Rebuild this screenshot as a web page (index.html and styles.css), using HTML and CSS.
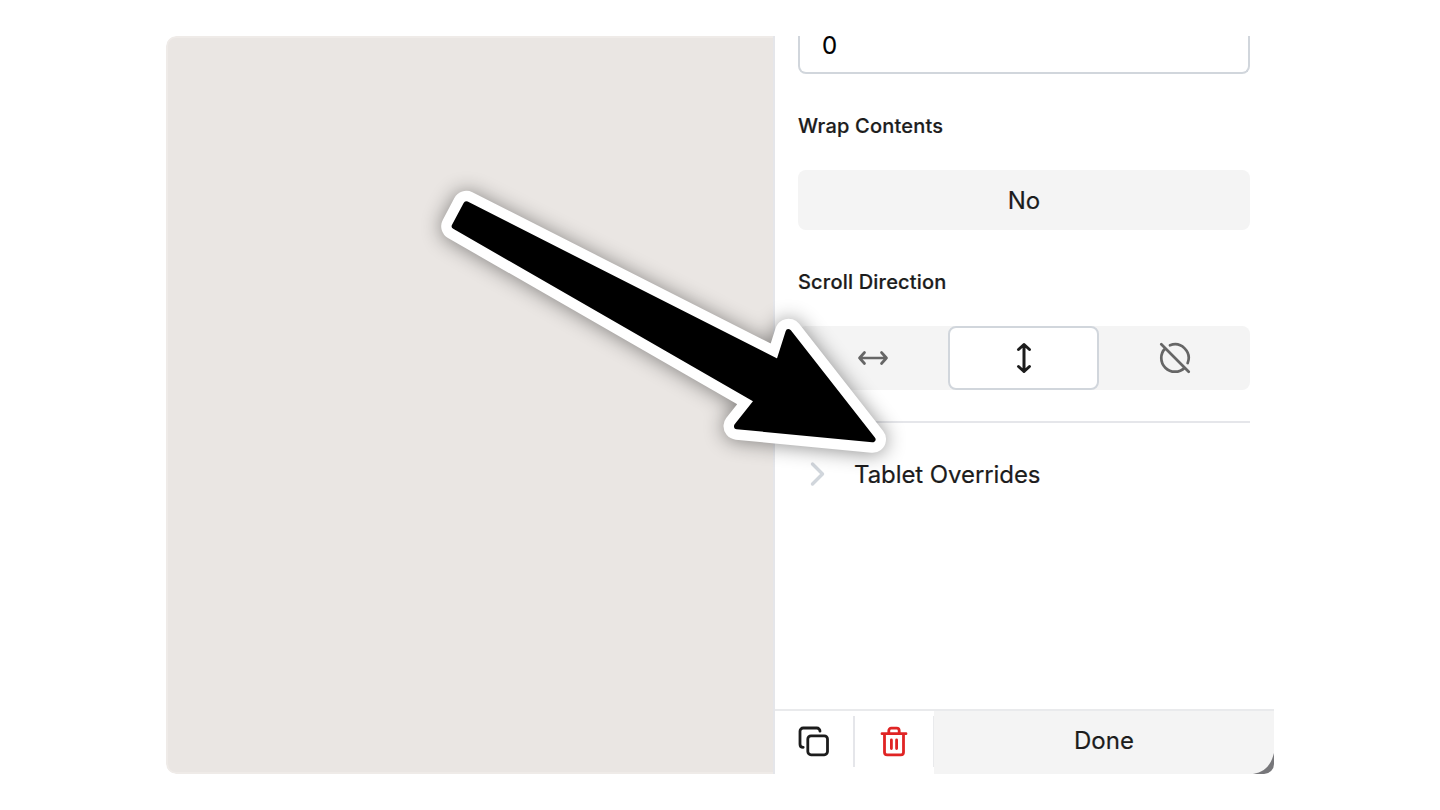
FILE: index.html
```html
<!DOCTYPE html>
<html lang="en">
<head>
<meta charset="utf-8">
<title>Layout settings</title>
<link rel="stylesheet" href="styles.css">
</head>
<body>
<main class="window">
  <div class="canvas"></div>
  <section class="panel">
    <div class="fields">
      <div class="number-field"><span>0</span></div>
      <h2 class="label">Wrap Contents</h2>
      <button class="toggle">No</button>
      <h2 class="label">Scroll Direction</h2>
      <div class="segments">
        <button class="segment" aria-label="Horizontal">
          <svg width="32" height="32" viewBox="0 0 32 32"><path d="M2.500 16h27M7.500 10.500L2.500 16l5 5.500M24.500 10.500l5 5.500-5 5.500"/></svg>
        </button>
        <button class="segment selected" aria-label="Vertical">
          <svg width="32" height="32" viewBox="0 0 32 32"><path d="M16 2.500v27M10.500 7.500L16 2.500l5.500 5M10.500 24.500l5.500 5 5.500-5"/></svg>
        </button>
        <button class="segment" aria-label="None">
          <svg width="32" height="32" viewBox="0 0 32 32"><path d="M2.300 2.300l27.400 27.400M6.300 6.300A13.700 13.700 0 0 0 25.700 25.700M11 3.300A13.700 13.700 0 0 1 28.700 21"/></svg>
        </button>
      </div>
      <div class="overrides">
        <svg class="chevron" width="16" height="26" viewBox="0 0 16 26"><path d="M2.500 3l10 10-10 10"/></svg>
        <span>Tablet Overrides</span>
      </div>
    </div>
    <footer class="actions">
      <button class="action copy" aria-label="Duplicate">
        <svg width="32" height="32" viewBox="0 0 32 32"><rect x="9.800" y="9.800" width="19.700" height="19" rx="3.200"/><path d="M5.200 21.300C3.300 21.300 2 20 2 18.200V5.200C2 3.400 3.400 2 5.200 2h13.600c1.800 0 3.200 1.400 3.200 3.200"/></svg>
      </button>
      <button class="action trash" aria-label="Delete">
        <svg width="32" height="32" viewBox="0 0 32 32"><path d="M4 7.700h24M6.500 7.700v18.500c0 1.700 1 2.700 2.700 2.700h13.600c1.700 0 2.700-1 2.700-2.700V7.700M10.800 7.300V4.700c0-1.500 1-2.500 2.500-2.500h5.400c1.500 0 2.500 1 2.500 2.500v2.600M13.400 14v8.600M18.600 14v8.600"/></svg>
      </button>
      <button class="done">Done</button>
    </footer>
  </section>
  <svg class="corner" width="24" height="24" viewBox="0 0 24 24"><path d="M24 3C21 15 15 22 3 24H18Q24 24 24 18Z"/></svg>
</main>
<svg class="arrow" width="1440" height="810" viewBox="0 0 1440 810">
  <path class="arrow-outline" d="M466.300 204.300L778.800 362.700 788.500 332.200 872.500 439.300 737 426.200 757.500 400.300 454.700 226.200Z"/>
  <path class="arrow-fill" d="M466.300 204.300L778.800 362.700 788.500 332.200 872.500 439.300 737 426.200 757.500 400.300 454.700 226.200Z"/>
</svg>
</body>
</html>
```
FILE: styles.css
```css
* { box-sizing: border-box; }

body {
  margin: 0;
  height: 810px;
  padding: 36px 166px;
  overflow: hidden;
  background: #fff;
  color: #1c1c1c;
  font-family: Inter, "Liberation Sans", sans-serif;
}

button {
  margin: 0;
  padding: 0;
  border: 0;
  background: none;
  color: inherit;
  font: inherit;
}

svg {
  display: block;
  fill: none;
  stroke: currentColor;
  stroke-linecap: round;
  stroke-linejoin: round;
}

.window {
  position: relative;
  display: flex;
  width: 1108px;
  height: 738px;
  border-radius: 10px;
  overflow: hidden;
}

.canvas {
  width: 607px;
  background: #eae6e3;
  border: 2px solid #efebe8;
  border-right: 0;
  border-radius: 10px 0 0 10px;
}

.panel {
  flex: 1;
  display: flex;
  flex-direction: column;
  border-left: 2px solid #e5e6ea;
  background: #fff;
}

.fields {
  flex: 1;
  padding: 0 24px 0 23px;
}

.number-field {
  height: 38px;
  padding-left: 22px;
  border: 2px solid #d1d6dc;
  border-top: 0;
  border-radius: 0 0 8px 8px;
  color: #000;
  font-size: 24px;
  line-height: 19px;
  -webkit-text-stroke: 0.2px #000;
}

.label {
  margin: 40px 0 0;
  font-size: 20px;
  line-height: 24px;
  font-weight: 500;
  letter-spacing: 0.2px;
  -webkit-text-stroke: 0.2px #1c1c1c;
}

.toggle {
  display: block;
  width: 100%;
  height: 60px;
  margin-top: 32px;
  border-radius: 8px;
  background: #f4f4f4;
  font-size: 24px;
  -webkit-text-stroke: 0.2px #1c1c1c;
}

.segments {
  display: grid;
  grid-template-columns: 150px 151px 1fr;
  height: 64px;
  margin-top: 32px;
  border-radius: 8px;
  background: #f4f4f4;
}

.segment {
  display: grid;
  place-items: center;
  border-radius: 8px;
  color: #666;
  stroke-width: 2.7;
}

.selected {
  border: 2px solid #d1d6dc;
  background: #fff;
  color: #1c1c1c;
  stroke-width: 3;
}

.overrides {
  display: flex;
  align-items: center;
  gap: 28px;
  height: 104px;
  margin-top: 31px;
  padding-left: 12px;
  border-top: 2px solid #e5e6ea;
  font-size: 24px;
  letter-spacing: -0.08px;
  -webkit-text-stroke: 0.2px #1c1c1c;
}

.chevron {
  color: #d1d6dc;
  stroke-width: 3.4;
}

.actions {
  display: flex;
  height: 65px;
  border-top: 2px solid #e9eaec;
}

.action {
  display: grid;
  place-items: center;
  height: 51px;
  margin-top: 5px;
  border-right: 2px solid #e5e6ea;
}

.copy {
  width: 80px;
  stroke-width: 2.8;
}

.trash {
  width: 79px;
  border-right: 1px solid #e9eaec;
  color: #e02424;
  stroke-width: 2.8;
}

.done {
  flex: 1;
  padding-bottom: 4px;
  background: #f4f4f4;
  font-size: 24px;
  -webkit-text-stroke: 0.2px #1c1c1c;
}

.corner {
  position: absolute;
  right: 0;
  bottom: 0;
  fill: #77777a;
  stroke: none;
}

.arrow {
  position: absolute;
  top: 0;
  left: 0;
  pointer-events: none;
}

.arrow-outline {
  fill: #fff;
  stroke: #fff;
  stroke-width: 27px;
  filter: drop-shadow(0 1px 10px rgba(0, 0, 0, 0.45));
}

.arrow-fill {
  fill: #000;
  stroke: #000;
  stroke-width: 6px;
}
```
